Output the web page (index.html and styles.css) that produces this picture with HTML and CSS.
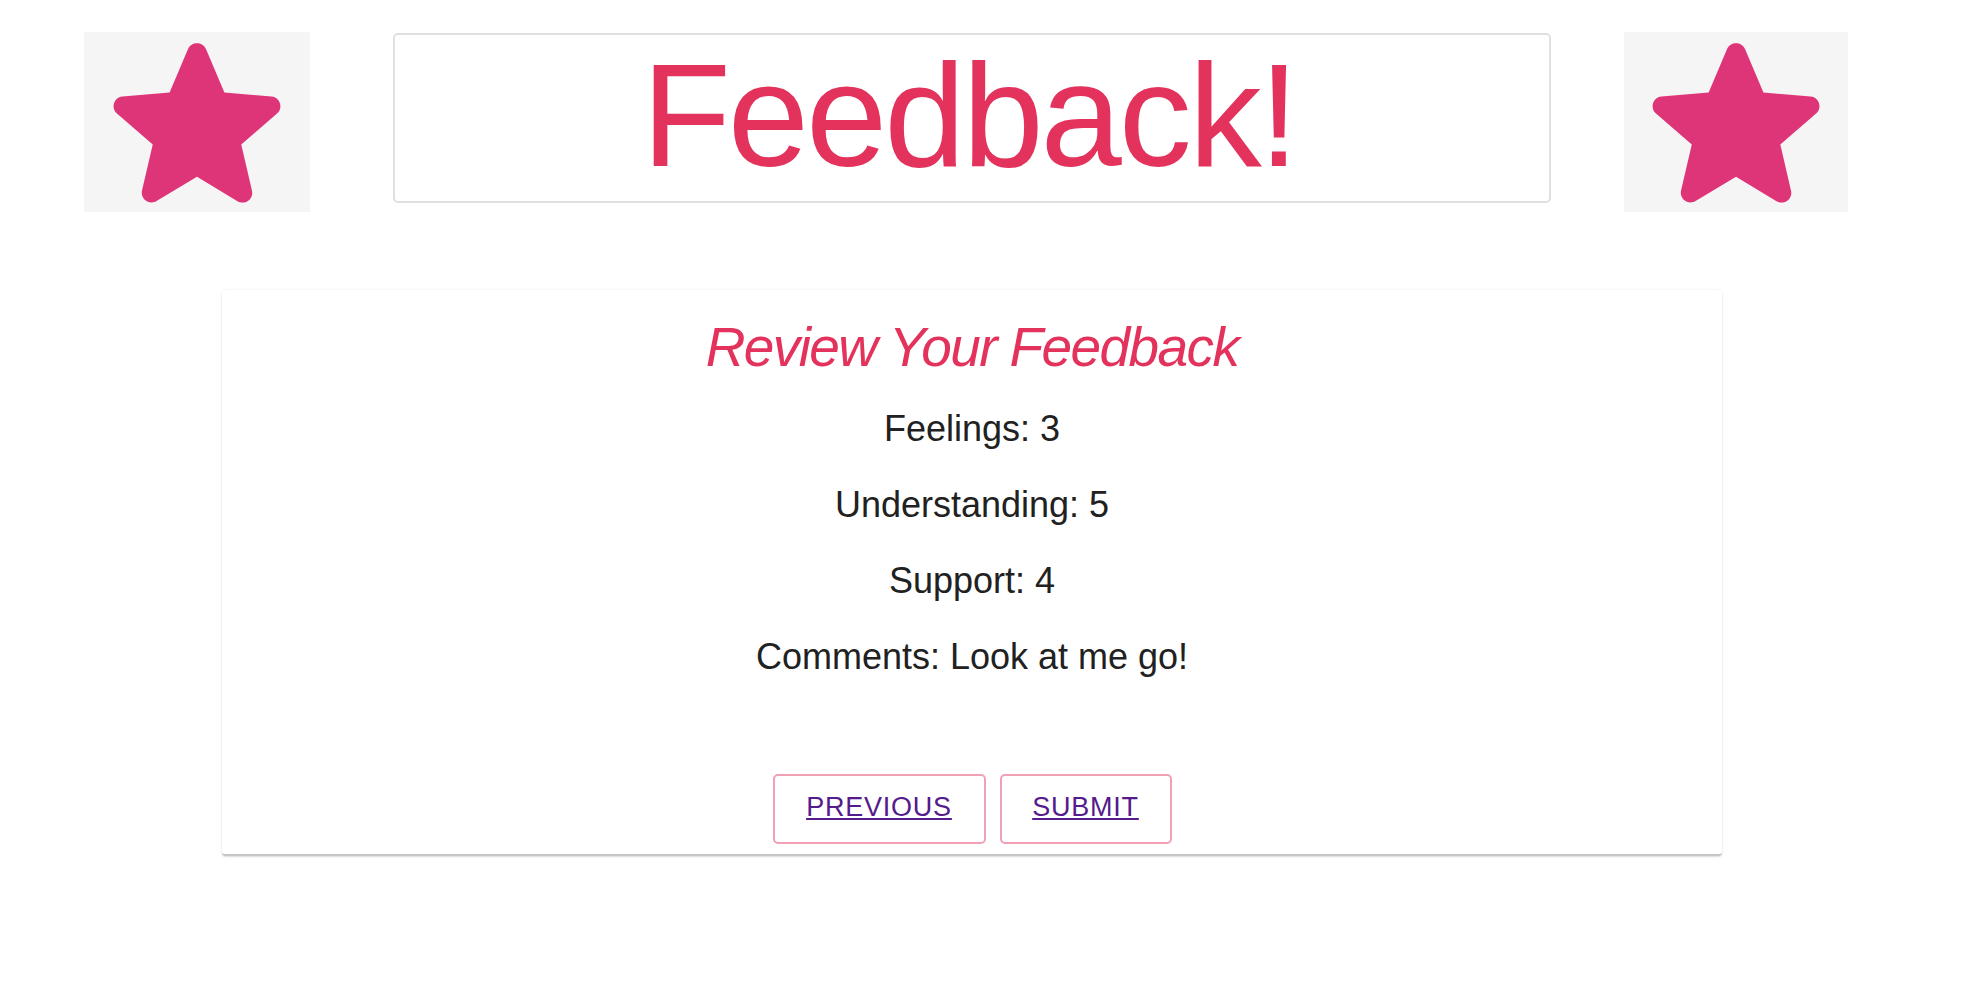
FILE: index.html
```html
<!DOCTYPE html>
<html lang="en">
<head>
<meta charset="utf-8">
<title>Feedback!</title>
<link rel="stylesheet" href="styles.css">
</head>
<body>
<header class="header">
  <div class="star-box">
    <svg class="star" width="226" height="180" viewBox="0.41 2.43 23.18 18.46" aria-hidden="true">
      <path d="M12 17.27l4.15 2.51c.76.46 1.69-.22 1.49-1.08l-1.1-4.72 3.67-3.18c.67-.58.31-1.68-.57-1.75l-4.83-.41-1.89-4.46c-.34-.81-1.5-.81-1.84 0L9.19 8.63l-4.83.41c-.88.07-1.24 1.17-.57 1.75l3.67 3.18-1.1 4.72c-.2.86.73 1.54 1.49 1.08L12 17.27z"/>
    </svg>
  </div>
  <div class="title-box">
    <h1 class="title">Feedback!</h1>
  </div>
  <div class="star-box star-box--right">
    <svg class="star" width="224" height="180" viewBox="0.51 2.43 22.97 18.46" aria-hidden="true">
      <path d="M12 17.27l4.15 2.51c.76.46 1.69-.22 1.49-1.08l-1.1-4.72 3.67-3.18c.67-.58.31-1.68-.57-1.75l-4.83-.41-1.89-4.46c-.34-.81-1.5-.81-1.84 0L9.19 8.63l-4.83.41c-.88.07-1.24 1.17-.57 1.75l3.67 3.18-1.1 4.72c-.2.86.73 1.54 1.49 1.08L12 17.27z"/>
    </svg>
  </div>
</header>

<main class="card">
  <h2 class="card-title">Review Your Feedback</h2>
  <div class="summary">
    <p class="summary-line">Feelings: 3</p>
    <p class="summary-line">Understanding: 5</p>
    <p class="summary-line">Support: 4</p>
    <p class="summary-line">Comments: Look at me go!</p>
  </div>
  <div class="actions">
    <a class="btn btn--prev" href="#">PREVIOUS</a>
    <a class="btn btn--submit" href="#">SUBMIT</a>
  </div>
</main>
</body>
</html>
```

FILE: styles.css
```css
html, body {
  margin: 0;
  padding: 0;
  background: #ffffff;
}

body {
  font-family: "Liberation Sans", Arial, Helvetica, sans-serif;
  color: #212121;
  min-height: 982px;
}

.header {
  display: flex;
  align-items: flex-start;
  padding: 32px 0 0 84px;
}

.star-box {
  width: 226px;
  height: 180px;
  background: #f5f5f5;
  flex: none;
}

.star-box--right {
  width: 224px;
  margin-left: 73px;
}

.star {
  display: block;
  fill: #de3579;
}

.title-box {
  flex: none;
  box-sizing: border-box;
  width: 1158px;
  height: 170px;
  margin: 1px 0 0 83px;
  border: 2px solid #e0e0e0;
  border-radius: 5px;
  display: flex;
  align-items: center;
  justify-content: center;
  padding: 0 6px 4px 0;
}

.title {
  margin: 0;
  font-size: 146px;
  line-height: 1;
  font-weight: 400;
  letter-spacing: -3px;
  color: #e3325c;
}

.card {
  box-sizing: border-box;
  width: 1500px;
  margin: 78px 0 0 222px;
  padding: 25px 16px 10px;
  border-radius: 4px;
  border-bottom: 2px solid #c6c6c6;
  background: #ffffff;
  box-shadow: 0 1px 2px 0 rgba(0, 0, 0, 0.12), 0 0 3px 0 rgba(0, 0, 0, 0.06);
  text-align: center;
}

.card-title {
  margin: 0 0 29px;
  font-size: 55px;
  line-height: 64px;
  font-style: italic;
  font-weight: 400;
  letter-spacing: -1.6px;
  color: #e3325c;
}

.summary {
  display: flex;
  flex-direction: column;
  gap: 34px;
}

.summary-line {
  margin: 0;
  font-size: 36px;
  line-height: 42px;
  color: #212121;
}

.actions {
  display: flex;
  justify-content: center;
  gap: 14px;
  margin-top: 96px;
}

.btn {
  box-sizing: border-box;
  height: 70px;
  display: inline-flex;
  align-items: center;
  justify-content: center;
  padding-bottom: 3px;
  border: 2px solid #f2a0b3;
  border-radius: 5px;
  font-size: 27px;
  letter-spacing: 0.77px;
  color: #551a8b;
  text-decoration: underline;
  text-underline-offset: 2px;
}

.btn--prev {
  width: 213px;
}

.btn--submit {
  width: 172px;
}
```
